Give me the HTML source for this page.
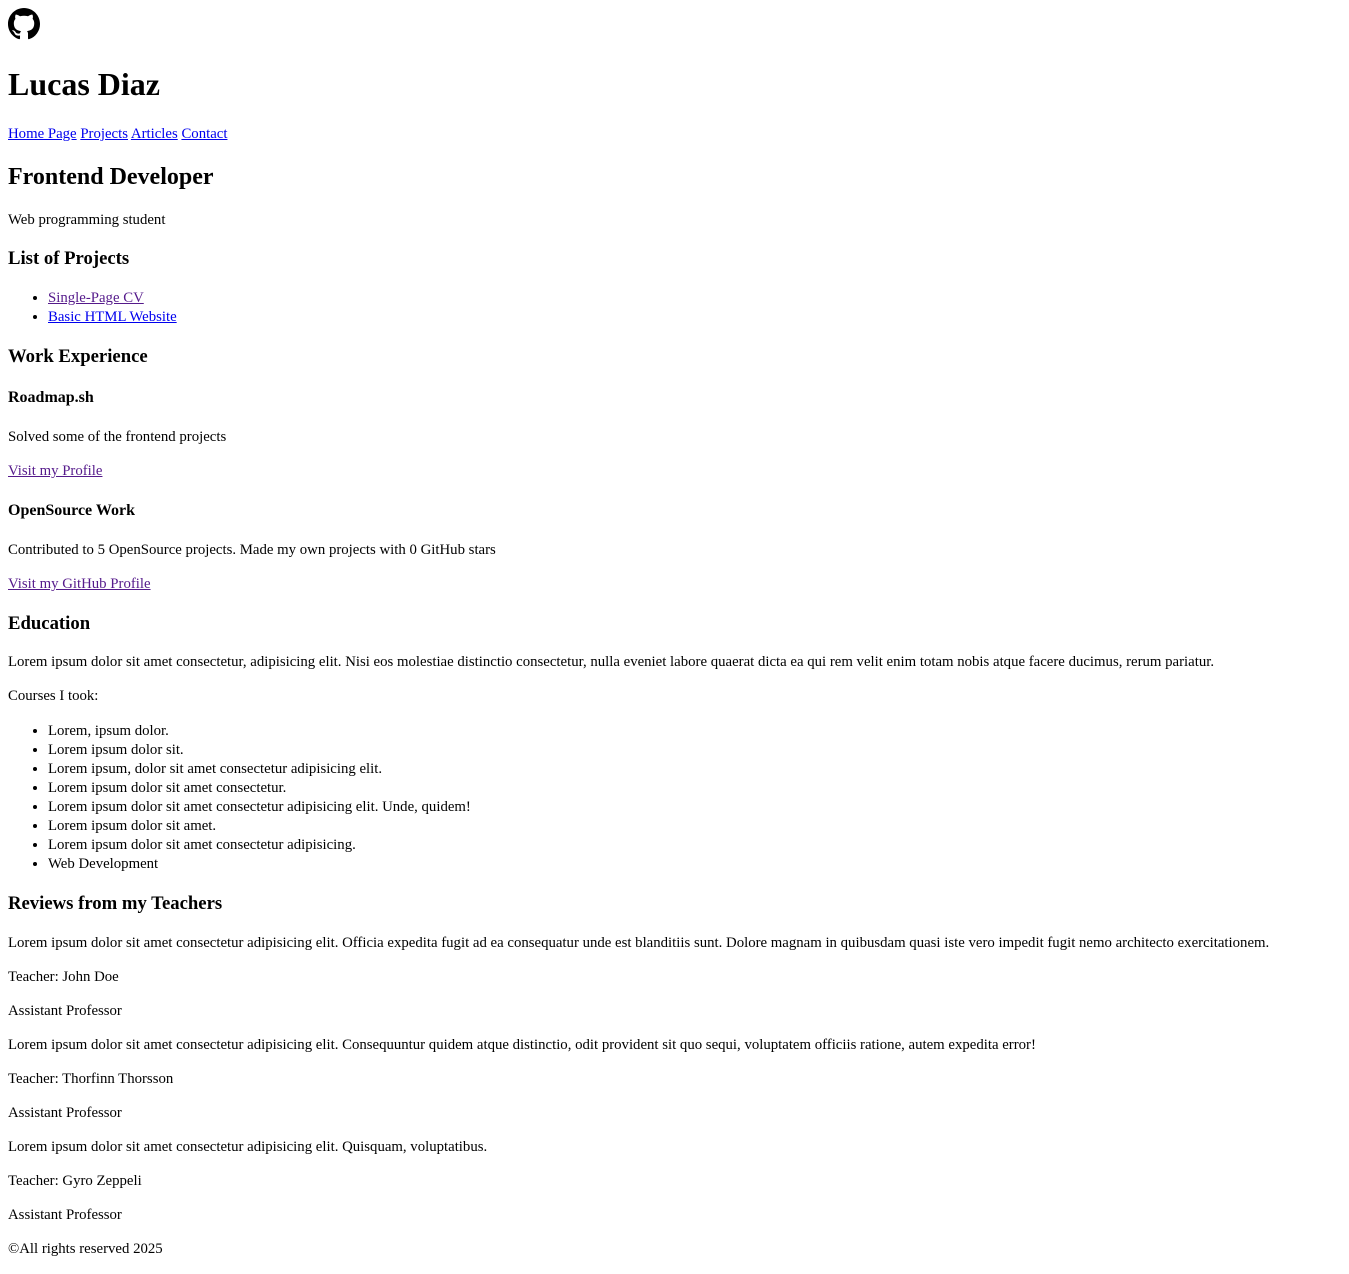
<!DOCTYPE html>
<html><head><meta charset="utf-8"><style>
body{margin:8px;font-family:"Liberation Serif",serif;font-size:16px;color:#000;background:#fff}
p,li,nav{font-size:14.8px;line-height:19px}
p{margin:15px 0}
ul{margin:16px 0}
h4{margin:21px 0}
a{color:#00e}
a.v{color:#551a8b}
</style></head><body>
<div><svg width="32" height="32" viewBox="0 0 16 16"><path fill="#000" d="M8 0C3.58 0 0 3.58 0 8c0 3.54 2.29 6.53 5.470 7.590.4.07.55-.17.55-.38 0-.19-.01-.82-.01-1.49-2.01.37-2.530-.49-2.690-.94-.09-.23-.48-.94-.82-1.130-.28-.15-.68-.52-.01-.53.63-.01 1.08.58 1.230.82.72 1.21 1.870.87 2.330.66.07-.52.28-.87.51-1.070-1.78-.2-3.64-.89-3.64-3.950 0-.87.31-1.59.82-2.150-.08-.2-.36-1.02.08-2.120 0 0 .67-.21 2.2.82.64-.18 1.32-.27 2-.27.68 0 1.36.09 2 .27 1.53-1.04 2.2-.82 2.2-.82.44 1.1.16 1.92.08 2.12.51.56.82 1.27.82 2.15 0 3.07-1.87 3.75-3.65 3.95.29.25.54.73.54 1.48 0 1.07-.01 1.93-.01 2.2 0 .21.15.46.55.38A8.013 8.013 0 0016 8c0-4.42-3.58-8-8-8z"/></svg></div>
<h1>Lucas Diaz</h1>
<nav><a href="#">Home Page</a> <a href="#">Projects</a> <a href="#">Articles</a> <a href="#">Contact</a></nav>
<h2>Frontend Developer</h2>
<p>Web programming student</p>
<h3>List of Projects</h3>
<ul><li><a class="v" href="#">Single-Page CV</a></li><li><a href="#">Basic HTML Website</a></li></ul>
<h3>Work Experience</h3>
<h4>Roadmap.sh</h4>
<p>Solved some of the frontend projects</p>
<p><a class="v" href="#">Visit my Profile</a></p>
<h4>OpenSource Work</h4>
<p>Contributed to 5 OpenSource projects. Made my own projects with 0 GitHub stars</p>
<p><a class="v" href="#">Visit my GitHub Profile</a></p>
<h3>Education</h3>
<p>Lorem ipsum dolor sit amet consectetur, adipisicing elit. Nisi eos molestiae distinctio consectetur, nulla eveniet labore quaerat dicta ea qui rem velit enim totam nobis atque facere ducimus, rerum pariatur.</p>
<p>Courses I took:</p>
<ul><li>Lorem, ipsum dolor.</li><li>Lorem ipsum dolor sit.</li><li>Lorem ipsum, dolor sit amet consectetur adipisicing elit.</li><li>Lorem ipsum dolor sit amet consectetur.</li><li>Lorem ipsum dolor sit amet consectetur adipisicing elit. Unde, quidem!</li><li>Lorem ipsum dolor sit amet.</li><li>Lorem ipsum dolor sit amet consectetur adipisicing.</li><li>Web Development</li></ul>
<h3>Reviews from my Teachers</h3>
<p>Lorem ipsum dolor sit amet consectetur adipisicing elit. Officia expedita fugit ad ea consequatur unde est blanditiis sunt. Dolore magnam in quibusdam quasi iste vero impedit fugit nemo architecto exercitationem.</p>
<p>Teacher: John Doe</p>
<p>Assistant Professor</p>
<p>Lorem ipsum dolor sit amet consectetur adipisicing elit. Consequuntur quidem atque distinctio, odit provident sit quo sequi, voluptatem officiis ratione, autem expedita error!</p>
<p>Teacher: Thorfinn Thorsson</p>
<p>Assistant Professor</p>
<p>Lorem ipsum dolor sit amet consectetur adipisicing elit. Quisquam, voluptatibus.</p>
<p>Teacher: Gyro Zeppeli</p>
<p>Assistant Professor</p>
<p>©All rights reserved 2025</p>
</body></html>
